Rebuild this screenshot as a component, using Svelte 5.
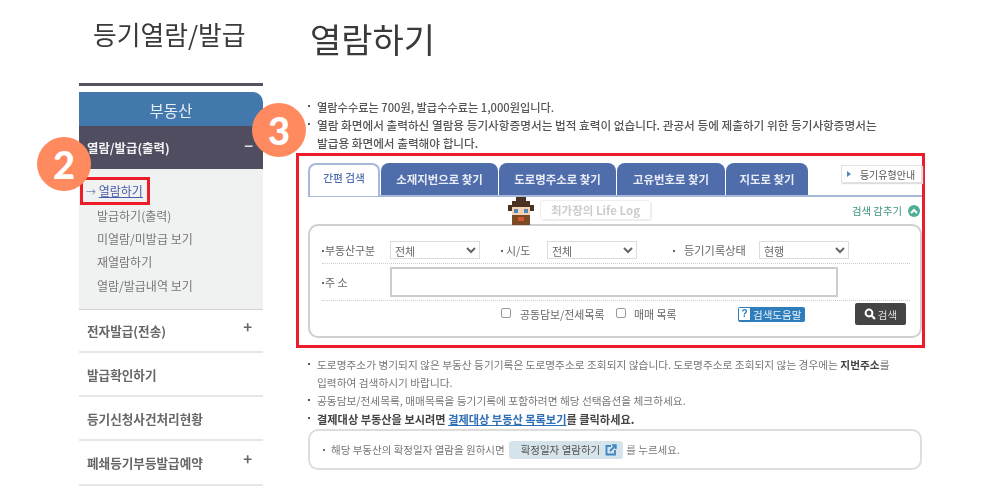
<script>
  const subMenu = ['발급하기(출력)', '미열람/미발급 보기', '재열람하기', '열람/발급내역 보기'];
  const tabs = [
    { label: '소재지번으로 찾기', width: 117 },
    { label: '도로명주소로 찾기', width: 117 },
    { label: '고유번호로 찾기', width: 108 },
    { label: '지도로 찾기', width: 82 }
  ];
  const rows = [
    { label: '전자발급(전송)', plus: true, height: 43 },
    { label: '발급확인하기', plus: false, height: 44 },
    { label: '등기신청사건처리현황', plus: false, height: 44 },
    { label: '폐쇄등기부등발급예약', plus: true, height: 45 }
  ];
</script>

<div class="page">
  <aside class="sidebar">
    <h2>등기열람/발급</h2>
    <div class="bar"></div>
    <div class="side-head">부동산</div>
    <div class="side-open"><span>열람/발급(출력)</span><i class="sign">−</i></div>
    <div class="side-sub">
      <a class="current" href="#top"><span class="arrow">→</span> <u>열람하기</u></a>
      {#each subMenu as item}
        <div class="sub-item">{item}</div>
      {/each}
    </div>
    {#each rows as row}
      <div class="side-row" style="height: {row.height}px">
        <span>{row.label}</span>
        {#if row.plus}<i class="sign">+</i>{/if}
      </div>
    {/each}
  </aside>

  <main class="content">
    <h1>열람하기</h1>
    <ul class="notes top">
      <li class="fee">열람수수료는 700원, 발급수수료는 1,000원입니다.</li>
      <li>열람 화면에서 출력하신 열람용 등기사항증명서는 법적 효력이 없습니다. 관공서 등에 제출하기 위한 등기사항증명서는<br />발급용 화면에서 출력해야 합니다.</li>
    </ul>

    <section class="redbox">
      <div class="tabs">
        <div class="tab active">간편 검색</div>
        {#each tabs as tab}
          <div class="tab" style="width: {tab.width}px">{tab.label}</div>
        {/each}
        <button class="guide"><span class="tri"></span>등기유형안내</button>
      </div>

      <div class="hide-line">
        <span>검색 감추기</span>
        <span class="up">
          <svg width="8" height="6" viewBox="0 0 8 6"><path d="M1 5 L4 2 L7 5" fill="none" stroke="#fff" stroke-width="2" /></svg>
        </span>
      </div>

      <div class="search">
        <div class="row first">
          <label class="f1">부동산구분</label>
          <select><option>전체</option></select>
          <label class="f2">시/도</label>
          <select><option>전체</option></select>
          <label class="f3">등기기록상태</label>
          <select><option>현행</option></select>
        </div>
        <div class="row second">
          <label class="f1">주 소</label>
          <input type="text" />
        </div>
        <div class="row third">
          <input type="checkbox" />
          <span class="chk-a">공동담보/전세목록</span>
          <input type="checkbox" />
          <span class="chk-b">매매 목록</span>
          <button class="help"><b>?</b>검색도움말</button>
          <button class="go">
            <svg width="12" height="12" viewBox="0 0 12 12"><circle cx="5" cy="5" r="3.4" fill="none" stroke="#fff" stroke-width="2" /><path d="M7.5 7.5 L11 11" stroke="#fff" stroke-width="2.2" /></svg>
            검색
          </button>
        </div>
      </div>

      <div class="watermark">
        <svg width="26" height="28" viewBox="0 0 13 14" shape-rendering="crispEdges">
          <rect x="4" y="0" width="5" height="3" fill="#4a3322" />
          <rect x="2" y="2" width="9" height="2" fill="#4a3322" />
          <rect x="0" y="4" width="13" height="3" fill="#4a3322" />
          <rect x="2" y="5" width="9" height="4" fill="#f3d3b3" />
          <rect x="3" y="6" width="2" height="2" fill="#4f86b5" />
          <rect x="8" y="6" width="2" height="2" fill="#4f86b5" />
          <rect x="2" y="9" width="9" height="5" fill="#7c4a24" />
          <rect x="5" y="10" width="3" height="2" fill="#d8562f" />
        </svg>
        <span>최가장의 Life Log</span>
      </div>
    </section>

    <ul class="notes bottom">
      <li>도로명주소가 병기되지 않은 부동산 등기기록은 도로명주소로 조회되지 않습니다. 도로명주소로 조회되지 않는 경우에는 <b>지번주소</b>를<br />입력하여 검색하시기 바랍니다.</li>
      <li>공동담보/전세목록, 매매목록을 등기기록에 포함하려면 해당 선택옵션을 체크하세요.</li>
      <li class="strong"><b>결제대상 부동산을 보시려면 <a href="#top">결제대상 부동산 목록보기</a>를 클릭하세요.</b></li>
    </ul>

    <div class="info">
      <span class="dot">해당 부동산의 확정일자 열람을 원하시면</span>
      <span class="pill">확정일자 열람하기
        <svg width="12" height="12" viewBox="0 0 12 12" fill="none" stroke="#3f86c4" stroke-width="1.8">
          <path d="M6 2 H1.5 V10.5 H10 V6" />
          <path d="M5 7 L10.5 1.5 M7 1.2 H10.8 V5" />
        </svg>
      </span>
      <span>를 누르세요.</span>
    </div>
  </main>

  <div class="badge two">2</div>
  <div class="badge three">3</div>
</div>

<style>
  :global(body) {
    margin: 0;
    background: #fff;
  }
  .page {
    position: relative;
    display: flex;
    gap: 33px;
    width: 1000px;
    height: 500px;
    padding-left: 79px;
    box-sizing: border-box;
    overflow: hidden;
    font-family: "Noto Sans CJK KR", "Noto Sans", sans-serif;
    color: #444;
  }
  .page > aside, .page > main {
    filter: blur(0.4px);
  }

  /* left menu */
  .sidebar {
    flex: none;
    width: 184px;
  }
  h2 {
    margin: 0;
    height: 83px;
    padding: 16px 0 0 14px;
    box-sizing: border-box;
    font-size: 25.8px;
    line-height: 36px;
    font-weight: 400;
    color: #3a3a3a;
    white-space: nowrap;
  }
  .bar {
    height: 3px;
    background: #55535f;
    margin-bottom: 6px;
  }
  .side-head {
    height: 34px;
    background: #4378ac;
    color: #e8eef5;
    border-radius: 0 10px 0 0;
    text-align: center;
    font-size: 15.5px;
    line-height: 36px;
  }
  .side-open {
    display: flex;
    justify-content: space-between;
    height: 43px;
    padding: 11px 10px 0 8px;
    box-sizing: border-box;
    background: #4f4d5f;
    color: #f2f2f2;
    font-size: 12.4px;
    font-weight: 700;
    line-height: 22px;
  }
  .sign {
    font-style: normal;
    font-size: 15px;
    font-weight: 700;
    line-height: 18px;
    color: #ddd;
  }
  .side-sub {
    height: 141px;
    padding: 8px 0 0 1px;
    box-sizing: border-box;
    background: #f0f1f1;
    border-bottom: 1px solid #d4d4d4;
    font-size: 12px;
    color: #777;
  }
  .current {
    display: block;
    width: 70px;
    height: 28px;
    box-sizing: border-box;
    margin-bottom: -1px;
    border: 3px solid #ec1c2b;
    padding-left: 3px;
    color: #4a5aa5;
    line-height: 21px;
    text-decoration: none;
    white-space: nowrap;
  }
  .arrow {
    font-size: 10px;
    color: #7c83b5;
  }
  .sub-item {
    padding-left: 17px;
    height: 23.2px;
    line-height: 23.2px;
    white-space: nowrap;
  }
  .side-row {
    display: flex;
    justify-content: space-between;
    align-items: center;
    padding: 0 11px 0 8px;
    box-sizing: border-box;
    border-bottom: 2px solid #e6e6e6;
    font-size: 12.6px;
    font-weight: 700;
    color: #666;
  }
  .side-row .sign {
    color: #666;
    margin-top: -8px;
  }

  /* right side */
  .content {
    flex: none;
    width: 629px;
  }
  h1 {
    margin: 0;
    height: 98px;
    padding: 16px 0 0 14px;
    box-sizing: border-box;
    font-size: 34px;
    line-height: 46px;
    font-weight: 400;
    color: #3a3a3a;
  }
  .notes {
    list-style: none;
    margin: 0;
    padding: 0 0 0 21px;
    font-size: 11.65px;
    color: #555;
  }
  .notes li {
    position: relative;
    white-space: nowrap;
  }
  .notes li::before {
    content: "";
    position: absolute;
    left: -9px;
    top: 7px;
    width: 2px;
    height: 2px;
    background: #555;
  }
  .notes.top {
    height: 55px;
    line-height: 18px;
    font-weight: 500;
  }
  .notes .fee {
    font-size: 11.2px;
  }
  .redbox {
    position: relative;
    width: 629px;
    height: 195px;
    box-sizing: border-box;
    border: 3px solid #ec1c2b;
    padding: 7px 0 0 9px;
  }
  .tabs {
    display: flex;
    width: 614px;
    height: 34px;
    box-sizing: border-box;
    border-bottom: 2px solid #a9b8d8;
    gap: 1px;
    position: relative;
  }
  .tab {
    height: 32px;
    border-radius: 8px 8px 0 0;
    background: #4f6cab;
    color: #e8ecf5;
    font-size: 11.4px;
    font-weight: 700;
    text-align: center;
    line-height: 32px;
    white-space: nowrap;
  }
  .tab.active {
    width: 72px;
    height: 33px;
    box-sizing: border-box;
    background: #fff;
    color: #4f6cab;
    border: 2px solid #a9b8d8;
    border-bottom: none;
    line-height: 26px;
    font-weight: 500;
    font-size: 10.7px;
  }
  .guide {
    position: absolute;
    right: 0;
    top: 2px;
    width: 81px;
    height: 18px;
    padding: 0 0 0 12px;
    background: #fff;
    border: 1px solid #e2e2e2;
    box-shadow: 1px 1px 1px #ddd;
    font: 10px "Noto Sans CJK KR", sans-serif;
    color: #555;
    cursor: pointer;
  }
  .tri {
    position: absolute;
    left: 5px;
    top: 5px;
    border-left: 4px solid #4f8ac4;
    border-top: 3px solid transparent;
    border-bottom: 3px solid transparent;
  }
  .hide-line {
    display: flex;
    justify-content: flex-end;
    align-items: center;
    gap: 6px;
    width: 612px;
    height: 27px;
    font-size: 10.4px;
    color: #3e9480;
  }
  .up {
    display: flex;
    align-items: center;
    justify-content: center;
    width: 12px;
    height: 12px;
    border-radius: 50%;
    background: #4fae96;
  }
  .search {
    width: 614px;
    height: 114px;
    box-sizing: border-box;
    border: 2px solid #cfcfcf;
    border-radius: 10px;
    padding: 0 10px 0 12px;
    font-size: 10.9px;
    color: #666;
  }
  .row {
    display: flex;
    align-items: center;
  }
  .row.first {
    padding-top: 10px;
    height: 27px;
    border-bottom: 1px dotted #ccc;
  }
  .row.second {
    height: 36px;
    border-bottom: 1px dotted #ccc;
  }
  .row.third {
    height: 34px;
    padding-bottom: 8px;
    box-sizing: border-box;
  }
  label {
    position: relative;
    display: block;
    padding-left: 3px;
    box-sizing: border-box;
    white-space: nowrap;
  }
  label::before {
    content: "";
    position: absolute;
    left: 0;
    top: 8px;
    width: 2px;
    height: 2px;
    background: #666;
  }
  .f1 { width: 68px; }
  .f2 { width: 46px; margin-left: 21px; padding-left: 5px; }
  .f3 { width: 86px; margin-left: 36px; padding-left: 11px; font-size: 11.2px; }
  select {
    width: 90px;
    height: 18px;
    padding: 0;
    border: 1px solid #ddd;
    background: #fff;
    color: #666;
    font: 11px "Noto Sans CJK KR", sans-serif;
  }
  .row.second input {
    width: 448px;
    height: 30px;
    box-sizing: border-box;
    border: 2px solid #ccc;
    background: #fff;
    margin: 0;
  }
  input[type="checkbox"] {
    appearance: none;
    width: 10px;
    height: 10px;
    margin: -2px 0 0;
    border: 1px solid #999;
    border-radius: 2px;
    background: #fff;
  }
  input[type="checkbox"]:first-child {
    margin-left: 179px;
  }
  .chk-a { margin-left: 9px; width: 96px; white-space: nowrap; }
  .chk-b { margin-left: 8px; width: 104px; white-space: nowrap; }
  .help {
    display: flex;
    align-items: center;
    gap: 3px;
    width: 67px;
    height: 15px;
    padding: 0 0 0 1px;
    border: none;
    border-radius: 2px;
    background: #2e7ebd;
    color: #e6f0f8;
    font: 10.5px "Noto Sans CJK KR", sans-serif;
    white-space: nowrap;
  }
  .help b {
    display: block;
    flex: none;
    width: 11px;
    height: 12px;
    background: #fff;
    color: #2e7ebd;
    font: 700 10px/12px "Liberation Sans", sans-serif;
  }
  .go {
    display: flex;
    align-items: center;
    justify-content: center;
    gap: 2px;
    width: 51px;
    height: 22px;
    margin-left: 50px;
    padding: 0;
    border: none;
    border-radius: 2px;
    background: #444;
    color: #ddd;
    font: 10.5px "Noto Sans CJK KR", sans-serif;
  }
  .watermark {
    position: absolute;
    left: 209px;
    top: 41px;
    display: flex;
    align-items: center;
    gap: 6px;
  }
  .watermark span {
    width: 111px;
    height: 20px;
    box-sizing: border-box;
    margin-bottom: 2px;
    border: 1px solid #eee;
    border-radius: 3px;
    box-shadow: 1px 1px 1px #eee;
    text-align: center;
    font-size: 11.5px;
    font-weight: 700;
    line-height: 18px;
    color: #ccc;
    white-space: nowrap;
  }
  .notes.bottom {
    margin-top: 8px;
    height: 73px;
    color: #777;
    font-size: 10.7px;
    line-height: 18px;
  }
  .notes.bottom b {
    color: #444;
  }
  .notes.bottom .strong {
    font-size: 11.2px;
  }
  .notes.bottom a {
    color: #2f6fb5;
  }
  .info {
    display: flex;
    align-items: center;
    gap: 3px;
    width: 614px;
    height: 41px;
    margin-left: 12px;
    box-sizing: border-box;
    border: 2px solid #ddd;
    border-radius: 10px;
    padding-left: 21px;
    font-size: 10.5px;
    color: #777;
    white-space: nowrap;
  }
  .dot {
    position: relative;
  }
  .dot::before {
    content: "";
    position: absolute;
    left: -8px;
    top: 7px;
    width: 2px;
    height: 2px;
    background: #777;
  }
  .pill {
    display: flex;
    align-items: center;
    gap: 5px;
    height: 18px;
    margin-left: 1px;
    padding: 0 6px 0 12px;
    border-radius: 3px;
    background: #d5e3ea;
    color: #555;
  }

  /* numbered markers */
  .badge {
    position: absolute;
    display: flex;
    align-items: center;
    justify-content: center;
    width: 54px;
    height: 54px;
    border-radius: 50%;
    background: #ff8a5f;
    color: #fff;
    font-family: "Lato", sans-serif;
    font-size: 38px;
    font-weight: 900;
  }
  .two { left: 37px; top: 137px; }
  .three { left: 252px; top: 103px; }
</style>
